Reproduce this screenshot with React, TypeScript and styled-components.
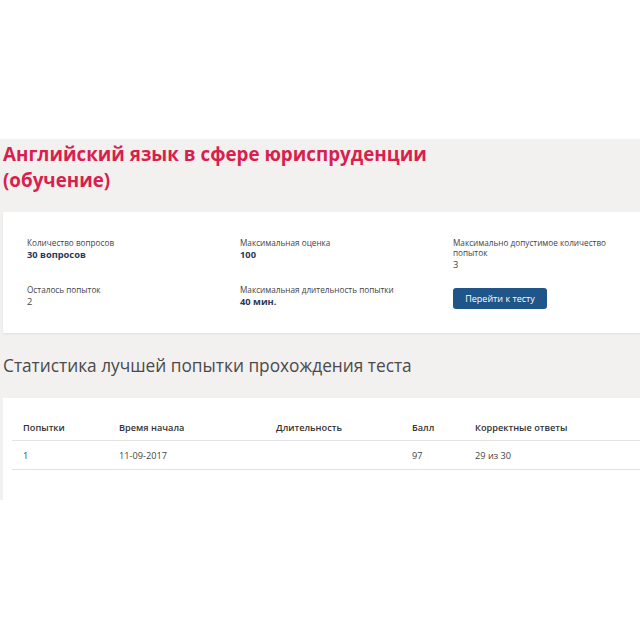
import styled, { createGlobalStyle } from "styled-components";

const GlobalStyle = createGlobalStyle`
  html, body {
    margin: 0;
    padding: 0;
    background: #ffffff;
    font-family: "Open Sans", "Noto Sans", "Liberation Sans", sans-serif;
  }
`;

const TopSpace = styled.div`
  height: 139px;
  background: #ffffff;
`;

const Section = styled.section`
  height: 361px;
  overflow: hidden;
  background: #f3f1f0;
  padding: 2px 0 0 3px;
  box-sizing: border-box;
`;

const Title = styled.h1`
  margin: 0;
  font-size: 18.8px;
  line-height: 26px;
  font-weight: 700;
  color: #d91f4e;
`;

const InfoCard = styled.div`
  margin-top: 19px;
  background: #ffffff;
  padding: 26px 0 24px 24px;
  box-shadow: 0 1px 2px rgba(0, 0, 0, 0.08);
  display: grid;
  grid-template-columns: repeat(3, 213px);
  row-gap: 14px;
`;

const Field = styled.div`
  padding-right: 40px;
`;

const Label = styled.div`
  font-size: 8.2px;
  line-height: 10px;
  color: #444;
`;

const Value = styled.div<{ $strong?: boolean }>`
  font-size: 9.3px;
  line-height: 12px;
  margin-top: 1px;
  font-weight: ${p => (p.$strong ? 700 : 400)};
  color: ${p => (p.$strong ? "#2a3a58" : "#444")};
`;

const GoButton = styled.button`
  width: 94px;
  height: 21px;
  border: none;
  border-radius: 3px;
  background: #1f5588;
  color: #ffffff;
  font-family: inherit;
  font-size: 9px;
  padding: 0;
  cursor: pointer;
`;

const Heading = styled.h2`
  margin: 21px 0 0;
  font-size: 17.3px;
  line-height: 24px;
  font-weight: 400;
  color: #4a4a4a;
`;

const TableCard = styled.div`
  margin-top: 20px;
  height: 110px;
  background: #ffffff;
  padding: 12px 0 0 9px;
  box-sizing: border-box;
`;

const Table = styled.table`
  width: 100%;
  table-layout: fixed;
  border-collapse: collapse;
  font-size: 9.2px;
  color: #444;
`;

const HeadCell = styled.th<{ $w?: number }>`
  box-sizing: border-box;
  width: ${p => (p.$w ? `${p.$w}px` : "auto")};
  text-align: left;
  font-weight: 600;
  color: #333;
  line-height: 14px;
  padding: 11px 11px 5px;
  border-bottom: 1px solid #e3e3e3;
  white-space: nowrap;
`;

const Cell = styled.td`
  line-height: 14px;
  padding: 8px 11px 6px;
  border-bottom: 1px solid #e3e3e3;
`;

export default function App() {
  return (
    <>
      <GlobalStyle />
      <TopSpace />
      <Section>
        <Title>
          Английский язык в сфере юриспруденции
          <br />
          (обучение)
        </Title>

        <InfoCard>
          <Field>
            <Label>Количество вопросов</Label>
            <Value $strong>30 вопросов</Value>
          </Field>
          <Field>
            <Label>Максимальная оценка</Label>
            <Value $strong>100</Value>
          </Field>
          <Field>
            <Label>Максимально допустимое количество попыток</Label>
            <Value>3</Value>
          </Field>
          <Field>
            <Label>Осталось попыток</Label>
            <Value>2</Value>
          </Field>
          <Field>
            <Label>Максимальная длительность попытки</Label>
            <Value $strong>40 мин.</Value>
          </Field>
          <Field>
            <GoButton>Перейти к тесту</GoButton>
          </Field>
        </InfoCard>

        <Heading>Статистика лучшей попытки прохождения теста</Heading>

        <TableCard>
          <Table>
            <thead>
              <tr>
                <HeadCell $w={96}>Попытки</HeadCell>
                <HeadCell $w={157}>Время начала</HeadCell>
                <HeadCell $w={136}>Длительность</HeadCell>
                <HeadCell $w={63}>Балл</HeadCell>
                <HeadCell>Корректные ответы</HeadCell>
              </tr>
            </thead>
            <tbody>
              <tr>
                <Cell>1</Cell>
                <Cell>11-09-2017</Cell>
                <Cell></Cell>
                <Cell>97</Cell>
                <Cell>29 из 30</Cell>
              </tr>
            </tbody>
          </Table>
        </TableCard>
      </Section>
    </>
  );
}
